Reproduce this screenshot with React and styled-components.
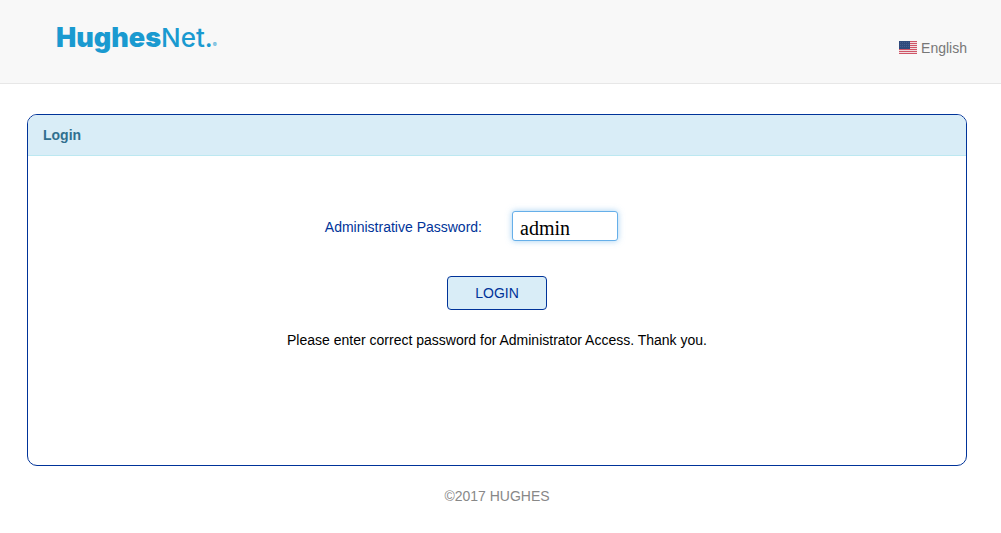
import React, { useState } from 'react';
import styled, { createGlobalStyle } from 'styled-components';

const GlobalStyle = createGlobalStyle`
    * {
        box-sizing:border-box;
    }

    body {
        margin:0;
        background:#fff;
        color:#000;
        font-family:"Liberation Sans", Arial, sans-serif;
        font-size:14px;
        line-height:20px;
    }
`;

const Header = styled.header`
    display:flex;
    justify-content:space-between;
    height:84px;
    padding:0 34px 0 56px;
    background:#f8f8f8;
    border-bottom:1px solid #e7e7e7;
`;

const Logo = styled.a`
    display:flex;
    align-items:baseline;
    padding-top:20px;
    color:#1a9ad0;
    font-family:Inter, sans-serif;
    line-height:36px;
    text-decoration:none;
`;

const LogoPart = styled.span`
    font-size:${props => props.$heavy ? 27 : 26}px;
    font-weight:${props => props.$heavy ? 900 : 500};
`;

const LogoMark = styled.span`
    font-size:6px;
    line-height:6px;
`;

const LanguageLink = styled.a`
    display:flex;
    align-items:center;
    gap:4px;
    height:20px;
    margin-top:38px;
    color:#777;
    text-decoration:none;
`;

const Page = styled.main`
    padding:30px 34px 0 27px;
`;

const Panel = styled.section`
    min-height:352px;
    border:1px solid #003399;
    border-radius:10px;
    overflow:hidden;
`;

const PanelHeading = styled.h1`
    margin:0;
    padding:10px 15px;
    background:#d9edf7;
    border-bottom:1px solid #bce8f1;
    color:#31708f;
    font-size:14px;
    font-weight:bold;
    line-height:20px;
`;

const LoginForm = styled.form`
    display:flex;
    flex-direction:column;
    align-items:center;
    padding:55px 0;
`;

const PasswordRow = styled.div`
    display:grid;
    grid-template-columns:1fr 1fr;
    align-items:center;
    column-gap:30px;
    width:100%;
    margin-bottom:35px;
`;

const PasswordLabel = styled.label`
    padding-top:2px;
    color:#003399;
    text-align:right;
`;

const PasswordInput = styled.input`
    width:106px;
    height:30px;
    padding:5px 7px 0;
    background:#fff;
    border:1px solid #66afe9;
    border-radius:3px;
    box-shadow:0 0 6px rgba(102, 175, 233, 0.6);
    outline:none;
    color:#000;
    font-family:"Liberation Serif", "Times New Roman", serif;
    font-size:20px;
`;

const LoginButton = styled.button`
    width:100px;
    height:34px;
    margin-bottom:20px;
    padding:0;
    background:#d9edf7;
    border:1px solid #003399;
    border-radius:4px;
    color:#003399;
    font-family:inherit;
    font-size:14px;
    cursor:pointer;
`;

const Message = styled.p`
    margin:0;
    text-align:center;
`;

const Footer = styled.footer`
    padding:20px 0;
    color:#888;
    text-align:center;
`;

const Flag = () => (
    <svg width="18" height="14" viewBox="0 0 18 14" aria-hidden="true">
        <rect width="18" height="13" fill="#f0dde0" />
        {[0, 2, 4, 6, 8, 10, 12].map(y => (
            <rect key={y} y={y} width="18" height="1" fill="#cf5567" />
        ))}
        <rect width="11" height="8" fill="#2f4a7c" />
        {/* stars */}
        {[1, 3, 5].map(y => (
            [1, 3, 5, 7, 9].map(x => (
                <rect key={`${x}-${y}`} x={x} y={y} width="1" height="1" fill="#455f8e" />
            ))
        ))}
    </svg>
);

const App = () => {
    const [password, setPassword] = useState('admin');

    return (
        <>
            <GlobalStyle />
            <Header>
                <Logo href="#">
                    <LogoPart $heavy>Hughes</LogoPart>
                    <LogoPart>Net.</LogoPart>
                    <LogoMark>®</LogoMark>
                </Logo>
                <LanguageLink href="#">
                    <Flag />
                    English
                </LanguageLink>
            </Header>

            <Page>
                <Panel>
                    <PanelHeading>Login</PanelHeading>
                    <LoginForm onSubmit={(e) => e.preventDefault()}>
                        <PasswordRow>
                            <PasswordLabel htmlFor="password">Administrative Password:</PasswordLabel>
                            <PasswordInput
                                id="password"
                                type="text"
                                value={password}
                                onChange={(e) => setPassword(e.target.value)}
                            />
                        </PasswordRow>
                        <LoginButton type="submit">LOGIN</LoginButton>
                        <Message>Please enter correct password for Administrator Access. Thank you.</Message>
                    </LoginForm>
                </Panel>
                <Footer>©2017 HUGHES</Footer>
            </Page>
        </>
    );
};

export default App;
